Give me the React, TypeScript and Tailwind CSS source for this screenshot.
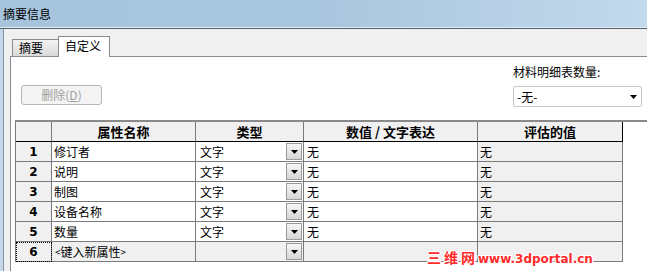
import React from "react";

const rows = [
  { n: 1, name: "修订者" },
  { n: 2, name: "说明" },
  { n: 3, name: "制图" },
  { n: 4, name: "设备名称" },
  { n: 5, name: "数量" },
];

function Arrow() {
  return (
    <svg width="7" height="4" viewBox="0 0 7 4" className="block">
      <path d="M0 0h7L3.5 4z" fill="#000" />
    </svg>
  );
}

function DropButton() {
  return (
    <div className="ml-auto mr-px flex h-[17px] w-[16px] items-center justify-center border border-[#9a9a9a] bg-gradient-to-b from-[#f6f6f6] to-[#d6d6d6]">
      <Arrow />
    </div>
  );
}

export default function App() {
  const cell = "h-[20px] border-r border-b border-[#7a7a7a] flex items-center text-[12px] leading-[16px] shrink-0";
  const num = "justify-center bg-[#f0f0f0] font-['DejaVu_Sans',sans-serif] font-bold text-[11px]";

  return (
    <div className="relative flex h-[271px] w-[647px] flex-col overflow-hidden bg-[#f0f0f0] font-['Noto_Sans_CJK_SC',sans-serif] text-black">
      {/* title bar */}
      <div className="flex h-[27px] items-center bg-gradient-to-r from-[#a6c4dd] via-[#a8c6de] to-[#c3d9ec] pl-[3px] text-[12px]">
        摘要信息
      </div>
      <div className="h-px bg-[#e2edf6]" />
      <div className="h-px bg-[#53616f]" />

      <div className="flex flex-1">
        <div className="w-[3px] bg-[#c4d8eb]" />
        <div className="w-px bg-[#8994a0]" />
        <div className="w-[6px]" />

        <div className="flex flex-1 flex-col">
          {/* tabs */}
          <div className="flex h-[27px] items-end pl-[2px]">
            <div className="flex h-[17px] w-[46px] items-center border-l border-t border-[#898c95] bg-gradient-to-b from-[#f3f3f3] to-[#d9d9d9] pl-[6px] text-[12px] leading-none">
              摘要
            </div>
            <div className="relative z-10 -mb-px flex h-[21px] w-[52px] items-start border-x border-t border-[#898c95] bg-white pl-[6px] pt-[2px] text-[12px] leading-[14px]">
              自定义
            </div>
          </div>

          {/* panel */}
          <div className="flex flex-1 flex-col border-l border-t border-[#898c95] bg-white">
            <div className="flex justify-between">
              <div className="ml-[10px] mt-[28px] flex h-[20px] w-[81px] items-center justify-center rounded-[3px] border border-[#b5b5b5] bg-[#f4f4f4] text-[12px] text-[#a0a0a0]">
                删除(<span className="underline">D</span>)
              </div>
              <div className="mr-[5px] flex flex-col">
                <div className="mt-[7px] h-[16px] text-[12px] leading-[16px]">材料明细表数量:</div>
                <div className="mt-[6px] flex h-[21px] w-[129px] items-center rounded-[2px] border border-[#c8c8c8] bg-white pl-[3px] pr-[4px] text-[12px]">
                  -无-
                  <span className="ml-auto">
                    <Arrow />
                  </span>
                </div>
              </div>
            </div>

            {/* table */}
            <div className="ml-[4px] mt-[13px] border-t-2 border-[#8a8a8a]">
              <div className="w-[608px] border-l border-[#7a7a7a]">
                <div className="flex">
                  <div className="h-[20px] w-[36px] border-b border-r border-black border-r-[#7a7a7a] bg-[#f0f0f0]" />
                  {[
                    ["属性名称", "w-[144px] border-r-[#7a7a7a]"],
                    ["类型", "w-[108px] border-r-[#7a7a7a]"],
                    ["数值 / 文字表达", "w-[174px] border-r-[#7a7a7a]"],
                    ["评估的值", "w-[145px] border-r-black"],
                  ].map(([t, c]) => (
                    <div
                      key={t}
                      className={`flex h-[20px] items-center justify-center border-b border-r border-black bg-[#f0f0f0] text-[13px] font-bold leading-[16px] ${c}`}
                    >
                      {t}
                    </div>
                  ))}
                </div>

                {rows.map((r) => (
                  <div key={r.n} className="flex">
                    <div className={`${cell} ${num} w-[36px]`}>{r.n}</div>
                    <div className={`${cell} w-[144px] bg-white pl-[2px]`}>{r.name}</div>
                    <div className={`${cell} w-[108px] bg-white pl-[4px]`}>
                      文字
                      <DropButton />
                    </div>
                    <div className={`${cell} w-[174px] bg-white pl-[3px]`}>无</div>
                    <div className={`${cell} w-[145px] bg-[#f0f0f0] pl-[2px]`}>无</div>
                  </div>
                ))}

                <div className="flex">
                  <div className={`${cell} ${num} w-[36px] outline-1 -outline-offset-1 outline-dotted outline-black`}>6</div>
                  <div className={`${cell} w-[144px] bg-[#f0f0f0] pl-[3px]`}>
                    <span className="text-[10px]">&lt;</span>键入新属性<span className="text-[10px]">&gt;</span>
                  </div>
                  <div className={`${cell} w-[108px] bg-[#f0f0f0]`}>
                    <DropButton />
                  </div>
                  <div className={`${cell} w-[174px] bg-[#f0f0f0]`} />
                  <div className={`${cell} w-[145px] bg-[#f0f0f0]`} />
                </div>
              </div>
            </div>
          </div>
        </div>
      </div>

      {/* watermark */}
      <div className="absolute left-[427px] top-[249px] whitespace-nowrap text-[14px] font-bold leading-[16px] text-[#ff2b2b] [text-shadow:1px_0_#fff,-1px_0_#fff,0_1px_#fff,0_-1px_#fff,1px_1px_#fff,-1px_-1px_#fff,1px_-1px_#fff,-1px_1px_#fff]">
        <span className="tracking-[3px]">三维网</span>
        <span className="font-['DejaVu_Sans',sans-serif] text-[12px]">www.3dportal.cn</span>
      </div>
    </div>
  );
}
